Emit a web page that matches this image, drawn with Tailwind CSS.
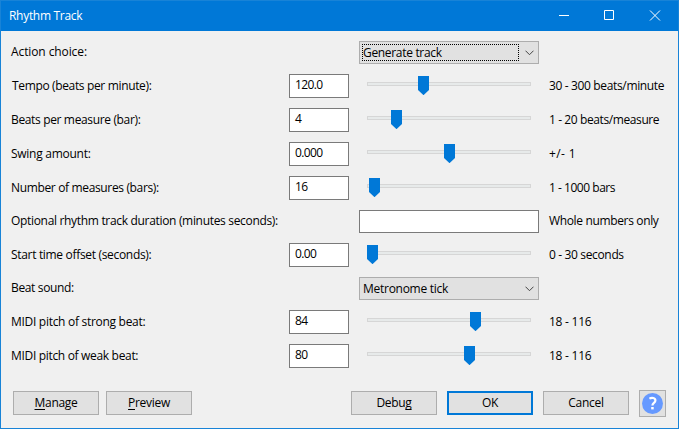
<!DOCTYPE html>
<html lang="en">
<head>
<meta charset="utf-8">
<title>Rhythm Track</title>
<script src="https://cdn.jsdelivr.net/npm/@tailwindcss/browser@4"></script>
</head>
<body class="overflow-hidden">
<div class="flex h-[429px] w-[679px] flex-col border border-[#1883d7] bg-[#f0f0f0] font-['Open_Sans','Noto_Sans',sans-serif] text-[12px] leading-[16px] tracking-[-0.35px] whitespace-nowrap text-black">
  <header class="flex h-[30px] shrink-0 items-center bg-[#0078d7] pl-[8px] text-white">
    <span class="tracking-[-0.3px]">Rhythm Track</span>
    <svg class="ml-auto mr-[11px]" width="110" height="30" fill="none" stroke="#fff"><path d="M2 14.500h10M47.500 9.500h9v9h-9zM93 9.500l10 10M103 9.500l-10 10"/></svg>
  </header>

  <main class="flex flex-col gap-[10px] pt-[10px] pl-[10px]">
    <div class="grid h-[23px] grid-cols-[348px_190px_auto]">
      <span class="pt-[3px] tracking-[-0.1px]">Action choice:</span>
      <div class="flex h-[23px] w-[180px] items-center justify-between border border-[#adadad] bg-[#e1e1e1] p-[2px]">
        <span class="flex h-[17px] w-[157px] items-center border border-dotted border-black tracking-[-0.32px]">Generate track</span>
        <svg class="mr-[2px]" width="9" height="6" fill="none" stroke="#444"><path d="M.5 .7l4 4 4-4"/></svg>
      </div>
    </div>

    <div class="grid h-[24px] grid-cols-[278px_78px_182px_auto]">
      <span class="pt-[4px] pl-px">Tempo (beats per minute):</span>
      <div class="w-[60px] border border-[#7a7a7a] bg-white pl-[5px] pt-[2px] tracking-[-0.6px]">120.0</div>
      <div class="relative mt-[8px] h-[4px] w-[164px] border border-[#d6d6d6] bg-[#e7eaea]"><svg class="absolute -top-[7px] left-[50px]" width="11" height="19"><path d="M0 0h11v14l-5.500 5.200L0 14z" fill="#0078d7"/></svg></div>
      <span class="pt-[4px]">30 - 300 beats/minute</span>
    </div>

    <div class="grid h-[24px] grid-cols-[278px_78px_182px_auto]">
      <span class="pt-[4px]">Beats per measure (bar):</span>
      <div class="w-[60px] border border-[#7a7a7a] bg-white pl-[5px] pt-[2px]">4</div>
      <div class="relative mt-[8px] h-[4px] w-[164px] border border-[#d6d6d6] bg-[#e7eaea]"><svg class="absolute -top-[7px] left-[23px]" width="11" height="19"><path d="M0 0h11v14l-5.500 5.200L0 14z" fill="#0078d7"/></svg></div>
      <span class="pt-[4px] tracking-[-0.4px]">1 - 20 beats/measure</span>
    </div>

    <div class="grid h-[24px] grid-cols-[278px_78px_182px_auto]">
      <span class="pt-[4px] tracking-[-0.27px]">Swing amount:</span>
      <div class="w-[60px] border border-[#7a7a7a] bg-white pl-[5px] pt-[2px] tracking-[-0.6px]">0.000</div>
      <div class="relative mt-[8px] h-[4px] w-[164px] border border-[#d6d6d6] bg-[#e7eaea]"><svg class="absolute -top-[7px] left-[76px]" width="11" height="19"><path d="M0 0h11v14l-5.500 5.200L0 14z" fill="#0078d7"/></svg></div>
      <span class="pt-[4px] tracking-[0.4px]">+/- 1</span>
    </div>

    <div class="grid h-[24px] grid-cols-[278px_78px_182px_auto]">
      <span class="pt-[4px]">Number of measures (bars):</span>
      <div class="w-[60px] border border-[#7a7a7a] bg-white pl-[5px] pt-[2px] tracking-[-0.6px]">16</div>
      <div class="relative mt-[8px] h-[4px] w-[164px] border border-[#d6d6d6] bg-[#e7eaea]"><svg class="absolute -top-[7px] left-[1px]" width="11" height="19"><path d="M0 0h11v14l-5.500 5.200L0 14z" fill="#0078d7"/></svg></div>
      <span class="pt-[4px] tracking-[-0.47px]">1 - 1000 bars</span>
    </div>

    <div class="grid h-[23px] grid-cols-[348px_190px_auto]">
      <span class="pt-[3px] tracking-[-0.32px]">Optional rhythm track duration (minutes seconds):</span>
      <div class="h-[23px] w-[180px] border border-[#7a7a7a] bg-white"></div>
      <span class="pt-[3px]">Whole numbers only</span>
    </div>

    <div class="grid h-[24px] grid-cols-[278px_78px_182px_auto]">
      <span class="pt-[4px] tracking-[-0.32px]">Start time offset (seconds):</span>
      <div class="w-[60px] border border-[#7a7a7a] bg-white pl-[5px] pt-[2px] tracking-[-0.6px]">0.00</div>
      <div class="relative mt-[8px] h-[4px] w-[164px] border border-[#d6d6d6] bg-[#e7eaea]"><svg class="absolute -top-[7px] -left-px" width="11" height="19"><path d="M0 0h11v14l-5.500 5.200L0 14z" fill="#0078d7"/></svg></div>
      <span class="pt-[4px]">0 - 30 seconds</span>
    </div>

    <div class="grid h-[23px] grid-cols-[348px_190px_auto]">
      <span class="pt-[3px]">Beat sound:</span>
      <div class="flex h-[23px] w-[180px] items-center justify-between border border-[#adadad] bg-[#e1e1e1] p-[2px]">
        <span class="pl-px tracking-[-0.27px]">Metronome tick</span>
        <svg class="mr-[2px]" width="9" height="6" fill="none" stroke="#444"><path d="M.5 .7l4 4 4-4"/></svg>
      </div>
    </div>

    <div class="grid h-[24px] grid-cols-[278px_78px_182px_auto]">
      <span class="pt-[4px] tracking-[-0.29px]">MIDI pitch of strong beat:</span>
      <div class="w-[60px] border border-[#7a7a7a] bg-white pl-[5px] pt-[2px] tracking-[-0.6px]">84</div>
      <div class="relative mt-[8px] h-[4px] w-[164px] border border-[#d6d6d6] bg-[#e7eaea]"><svg class="absolute -top-[7px] left-[102px]" width="11" height="19"><path d="M0 0h11v14l-5.500 5.200L0 14z" fill="#0078d7"/></svg></div>
      <span class="pt-[4px] tracking-[-0.25px]">18 - 116</span>
    </div>

    <div class="grid h-[24px] grid-cols-[278px_78px_182px_auto]">
      <span class="pt-[4px] tracking-[-0.32px]">MIDI pitch of weak beat:</span>
      <div class="w-[60px] border border-[#7a7a7a] bg-white pl-[5px] pt-[2px] tracking-[-0.6px]">80</div>
      <div class="relative mt-[8px] h-[4px] w-[164px] border border-[#d6d6d6] bg-[#e7eaea]"><svg class="absolute -top-[7px] left-[96px]" width="11" height="19"><path d="M0 0h11v14l-5.500 5.200L0 14z" fill="#0078d7"/></svg></div>
      <span class="pt-[4px] tracking-[-0.25px]">18 - 116</span>
    </div>
  </main>

  <footer class="mt-[22px] flex h-[27px] items-start pl-[12px] tracking-[-0.3px]">
    <button class="mt-px h-[24px] w-[86px] border border-[#adadad] bg-[#e1e1e1]"><u class="underline-offset-2">M</u>anage</button>
    <button class="mt-px ml-[7px] h-[24px] w-[86px] border border-[#adadad] bg-[#e1e1e1]"><u class="underline-offset-2">P</u>review</button>
    <button class="mt-px ml-[159px] h-[24px] w-[86px] border border-[#adadad] bg-[#e1e1e1]">Debu<u class="underline-offset-2 [text-decoration-skip-ink:none]">g</u></button>
    <button class="mt-px ml-[10px] h-[24px] w-[86px] border-2 border-[#0078d7] bg-[#e1e1e1]">OK</button>
    <button class="mt-px ml-[10px] h-[24px] w-[86px] border border-[#adadad] bg-[#e1e1e1]">Cancel</button>
    <button class="ml-[10px] flex h-[27px] w-[27px] items-center justify-center border border-[#adadad] bg-[#e1e1e1]" aria-label="Help">
      <svg width="21" height="21" fill="none"><circle cx="10.500" cy="10.500" r="10.500" fill="#6699ff"/><path d="M7.400 5.600c2.300-1.300 6-.9 6 1.900 0 2.500-3 2.400-3 5" stroke="#fff" stroke-width="2.200"/><path d="M9.200 14h2.500v2.400H9.200z" fill="#fff"/></svg>
    </button>
  </footer>
</div>
</body>
</html>
